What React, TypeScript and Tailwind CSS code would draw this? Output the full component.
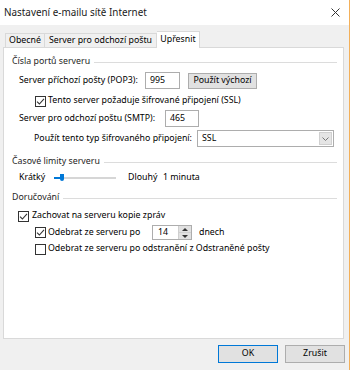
import React from "react";

const font = { fontFamily: '"Noto Sans", "Liberation Sans", sans-serif' };

const Check = ({ checked }: { checked: boolean }) => (
  <div className="w-[11px] h-[11px] border border-[#333333] bg-white flex items-center justify-center shrink-0">
    {checked && (
      <svg width="9" height="9" viewBox="0 0 9 9">
        <path d="M1 4.6 L3.4 7 L8 1.8" fill="none" stroke="#333333" strokeWidth="1.1" />
      </svg>
    )}
  </div>
);

const GroupHeading = ({ label }: { label: string }) => (
  <div className="flex items-center h-[14px] pl-[8px] pr-[6px] gap-[4px] text-[#1e1e1e]">
    <span>{label}</span>
    <div className="flex-1 h-px bg-[#dcdcdc]" />
  </div>
);

const App = () => {
  return (
    <div className="flex w-[351px] h-[370px] bg-white text-[8.8px] text-black whitespace-nowrap" style={font}>
      <div className="w-[349px] h-full flex flex-col bg-[#f0f0f0]">
        {/* Title bar */}
        <div className="h-[25px] bg-white flex items-center justify-between pl-[4px] pr-[9px] shrink-0">
          <span className="text-[9.9px] text-[#1a1a1a]">Nastavení e-mailu sítě Internet</span>
          <svg width="9" height="9" viewBox="0 0 9 9">
            <path d="M0.5 0.5 L8.5 8.5 M8.5 0.5 L0.5 8.5" stroke="#333333" strokeWidth="1" />
          </svg>
        </div>

        {/* Tabs */}
        <div className="flex items-end h-[17px] mt-[6px] pl-[5px] relative z-10 -mb-px">
          <div className="w-[40px] h-[15px] border border-b-0 border-[#d9d9d9] flex items-center justify-center">
            Obecné
          </div>
          <div className="w-[112px] h-[15px] border border-l-0 border-b-0 border-[#d9d9d9] flex items-center justify-center">
            Server pro odchozí poštu
          </div>
          <div className="w-[43px] h-[17px] border border-l-0 border-b-0 border-[#d9d9d9] bg-white flex items-center justify-center">
            Upřesnit
          </div>
        </div>

        {/* Panel */}
        <div className="mx-[3px] w-[341px] h-[292px] border border-[#d9d9d9] bg-white flex flex-col shrink-0">
          <div className="mt-[7px]">
            <GroupHeading label="Čísla portů serveru" />
          </div>

          <div className="flex items-center h-[17px] mt-[3px] pl-[15px]">
            <span className="w-[126px]">Server příchozí pošty (POP3):</span>
            <div className="w-[35px] h-[17px] border border-[#adadad] flex items-center pl-[4px]">995</div>
            <div className="ml-[8px] w-[69px] h-[16px] border border-[#adadad] bg-[#e1e1e1] flex items-center justify-center">
              Použít výchozí
            </div>
          </div>

          <div className="flex items-center h-[12px] mt-[6px] pl-[31px] gap-[2px]">
            <Check checked />
            <span>Tento server požaduje šifrované připojení (SSL)</span>
          </div>

          <div className="flex items-center h-[17px] mt-[3px] pl-[15px]">
            <span className="w-[146px]">Server pro odchozí poštu (SMTP):</span>
            <div className="w-[34px] h-[17px] border border-[#adadad] flex items-center pl-[4px]">465</div>
          </div>

          <div className="flex items-center h-[17px] mt-[3px] pl-[30px]">
            <span className="w-[163px]">Použít tento typ šifrovaného připojení:</span>
            <div className="w-[137px] h-[17px] border border-[#adadad] flex items-center">
              <span className="flex-1 pl-[4px]">SSL</span>
              <div className="w-[13px] h-[13px] mr-[1px] bg-[#e5e5e5] border border-[#d0d0d0] flex items-center justify-center">
                <svg width="7" height="4" viewBox="0 0 7 4">
                  <path d="M0.5 0.5 L3.5 3.5 L6.5 0.5" fill="none" stroke="#777777" strokeWidth="1" />
                </svg>
              </div>
            </div>
          </div>

          <div className="mt-[8px]">
            <GroupHeading label="Časové limity serveru" />
          </div>

          <div className="flex items-center h-[14px] mt-[2px] pl-[15px]">
            <span className="w-[35px]">Krátký</span>
            <div className="relative w-[62px] h-[8px] flex items-center">
              <div className="w-full h-[2px] bg-[#e7eaea] border-y border-[#d6d6d6]" />
              <div className="absolute left-0 w-[6px] h-[2px] bg-[#0078d7]" />
              <div className="absolute left-[6px] top-0 w-[4px] h-[7px] bg-[#0078d7] rounded-b-[2px]" />
            </div>
            <span className="ml-[12px] w-[35px]">Dlouhý</span>
            <span>1 minuta</span>
          </div>

          <div className="mt-[6px]">
            <GroupHeading label="Doručování" />
          </div>

          <div className="flex items-center h-[12px] mt-[5px] pl-[14px] gap-[3px]">
            <Check checked />
            <span>Zachovat na serveru kopie zpráv</span>
          </div>

          <div className="flex items-center h-[15px] mt-[3px] pl-[31px]">
            <Check checked />
            <span className="ml-[2px] w-[104px]">Odebrat ze serveru po</span>
            <div className="w-[40px] h-[15px] border border-[#adadad] flex items-center">
              <span className="flex-1 pl-[5px]">14</span>
              <div className="w-[13px] h-full flex flex-col bg-[#e1e1e1] border-l border-[#cfcfcf]">
                <div className="flex-1 flex items-center justify-center border-b border-[#cfcfcf]">
                  <svg width="6" height="3" viewBox="0 0 6 3"><path d="M0 3 L3 0 L6 3 Z" fill="#333333" /></svg>
                </div>
                <div className="flex-1 flex items-center justify-center">
                  <svg width="6" height="3" viewBox="0 0 6 3"><path d="M0 0 L3 3 L6 0 Z" fill="#333333" /></svg>
                </div>
              </div>
            </div>
            <span className="ml-[7px]">dnech</span>
          </div>

          <div className="flex items-center h-[12px] mt-[3px] pl-[31px] gap-[2px]">
            <Check checked={false} />
            <span>Odebrat ze serveru po odstranění z Odstraněné pošty</span>
          </div>
        </div>

        {/* Buttons */}
        <div className="flex justify-end gap-[7px] mt-[6px] pr-[4px]">
          <div className="w-[60px] h-[18px] border border-[#0078d7] bg-[#e1e1e1] flex items-center justify-center">OK</div>
          <div className="w-[60px] h-[18px] border border-[#adadad] bg-[#e1e1e1] flex items-center justify-center">Zrušit</div>
        </div>
      </div>
      <div className="w-px h-full bg-[#f3b05a]" />
    </div>
  );
};

export default App;
